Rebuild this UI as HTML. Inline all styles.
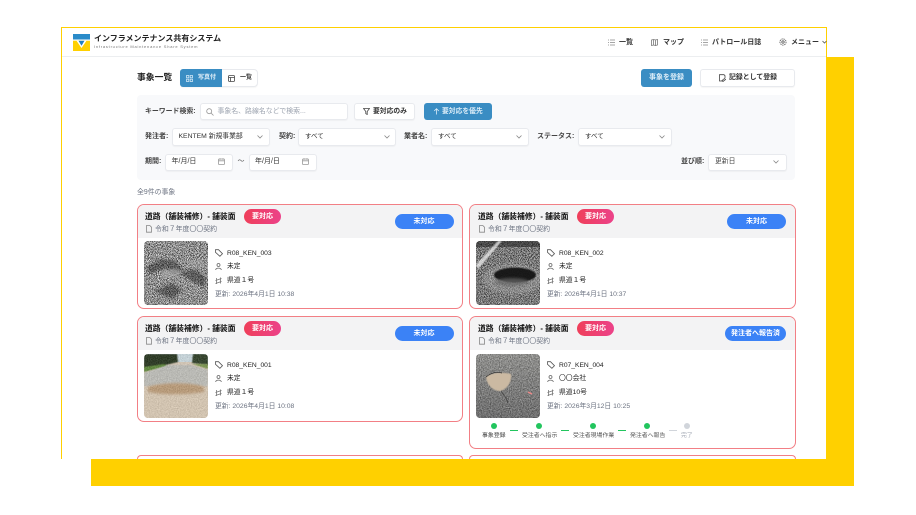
<!DOCTYPE html>
<html lang="ja"><head><meta charset="utf-8"><title>事象一覧</title>
<style>
*{box-sizing:border-box;margin:0;padding:0}
html,body{width:916px;height:515px;overflow:hidden;background:#fff}
body{position:relative;font-family:"Liberation Sans","Noto Sans CJK JP",sans-serif;color:#1f2937}
#w{position:absolute;left:0;top:0;width:916px;height:515px;filter:blur(.25px)}
.a{position:absolute}
.t{position:absolute;white-space:nowrap;line-height:12px;font-size:7px}
.b{font-weight:700}
.box{position:absolute;background:#fff;border:1px solid #e8eaee;border-radius:3px;box-shadow:0 1px 1px rgba(0,0,0,.04)}
.card{position:absolute;background:#fff;border:1.3px solid #f27f85;border-radius:7px;overflow:hidden}
.hd{position:absolute;left:0;right:0;top:0;background:#f3f3f4}
.pill{position:absolute;border-radius:8px;background:linear-gradient(90deg,#ef3f5a,#ec4289);color:#fff;font-weight:700;font-size:7px;line-height:15px;text-align:center}
.st{position:absolute;border-radius:8px;background:#3b82f6;color:#fff;font-weight:700;font-size:7px;line-height:15px;text-align:center}
svg{position:absolute;display:block}
.ic{fill:none;stroke:#6b7280;stroke-width:.8}
.dot{position:absolute;width:6px;height:6px;border-radius:50%;background:#22c55e}
.ln{position:absolute;height:1px;width:8px;background:#22c55e}
.ttl{font-size:7.800px;font-weight:700;color:#111}
.sub{font-size:6.900px;color:#6b7280}
.id{font-size:6.700px;color:#222}
.v{font-size:6.800px;color:#222}
.nv{font-size:7px;font-weight:700;color:#333}
.lb{font-size:7px;font-weight:700;color:#444}
</style></head><body><div id="w">
<div class="a" style="left:91px;top:57px;width:763px;height:429px;background:#ffd000"></div>
<div class="a" style="left:60.500px;top:26.500px;width:766.500px;height:432px;background:#fff;border:1.500px solid #ffd000;border-bottom:0"></div>
<div class="a" style="left:62px;top:56px;width:764px;height:1px;background:#eceef0"></div>

<!-- logo -->
<svg style="left:73px;top:34px" width="17" height="17" viewBox="0 0 17 17"><rect width="17" height="17" fill="#ffd000"/><rect width="17" height="6" fill="#2a8bc9"/><rect y="5.500" width="17" height="1.200" fill="#fff"/><path d="M3.500 6.700h10L8.500 14z" fill="#fff"/><path d="M5.500 6.700h6L8.500 11.800z" fill="#1f7fc0"/></svg>
<div class="t b" style="left:94px;top:33px;font-size:8px;color:#222">インフラメンテナンス共有システム</div>
<div class="t" style="left:94px;top:41px;font-size:4px;letter-spacing:.78px;color:#777">Infrastructure Maintenance Share System</div>

<!-- nav -->
<svg class="ic" style="left:608px;top:39px;stroke:#888" width="7" height="7"><path d="M0 1h1M2 1h5M0 3.500h1M2 3.500h5M0 6h1M2 6h5"/></svg>
<div class="t nv" style="left:619px;top:36.500px">一覧</div>
<svg class="ic" style="left:651px;top:39px;stroke:#777" width="7" height="7"><path d="M.5 1l2-.5 2 .5 2-.5v5.500l-2 .5-2-.5-2 .5zM2.500 .5v6M4.500 1v6"/></svg>
<div class="t nv" style="left:663px;top:36.500px">マップ</div>
<svg class="ic" style="left:701px;top:39px;stroke:#888" width="7" height="7"><path d="M0 1h1M2 1h5M0 3.500h1M2 3.500h5M0 6h1M2 6h5"/></svg>
<div class="t nv" style="left:712px;top:36.500px">パトロール日誌</div>
<svg class="ic" style="left:779px;top:38px;stroke:#555" width="8" height="8"><circle cx="4" cy="4" r="1.200"/><circle cx="4" cy="4" r="3.100" stroke-dasharray="1.400 .7"/></svg>
<div class="t nv" style="left:791px;top:36.500px">メニュー</div>
<svg class="ic" style="left:822px;top:40px;stroke:#555" width="5" height="4"><path d="M.5 1l2 2 2-2"/></svg>

<!-- title row -->
<div class="t b" style="left:137px;top:70.500px;font-size:8.800px;color:#222">事象一覧</div>
<div class="box" style="left:180px;top:69px;width:78px;height:18px;border-radius:4px"></div>
<div class="a" style="left:180px;top:69px;width:41.500px;height:18px;background:#3a8dc3;border-radius:3px 0 0 3px"></div>
<svg style="left:186px;top:74.500px;fill:none;stroke:#cfe6f5;stroke-width:.8" width="7" height="7"><rect x=".5" y=".5" width="2.300" height="2.300"/><rect x="4.200" y=".5" width="2.300" height="2.300"/><rect x=".5" y="4.200" width="2.300" height="2.300"/><rect x="4.200" y="4.200" width="2.300" height="2.300"/></svg>
<div class="t b" style="left:198px;top:72px;font-size:6px;color:#e6f2fa">写真付</div>
<svg class="ic" style="left:228px;top:74.500px;stroke:#444" width="7" height="7"><rect x=".5" y=".5" width="6" height="6" rx="1"/><path d="M.5 2.500h6M2.500 2.500v4"/></svg>
<div class="t b" style="left:240px;top:72px;font-size:6px;color:#333">一覧</div>

<div class="a" style="left:641px;top:69px;width:51px;height:18px;background:#3a8dc3;border-radius:3px"></div>
<div class="t b" style="left:641px;top:72px;width:51px;text-align:center;font-size:7px;color:#dcedf8">事象を登録</div>
<div class="box" style="left:700px;top:69px;width:95px;height:18px"></div>
<svg class="ic" style="left:718px;top:74px;stroke:#444" width="8" height="8"><path d="M5.500 7H1.500V.7h4.500l1 1V4M4 6.500l2.500-2 1 1-2.500 2z"/></svg>
<div class="t b" style="left:729px;top:72px;font-size:6.900px;color:#333">記録として登録</div>

<!-- filter panel -->
<div class="a" style="left:137px;top:95px;width:658px;height:85px;background:#f8f9fb;border-radius:4px"></div>
<div class="t lb" style="left:145px;top:106px;font-size:6.900px">キーワード検索:</div>
<div class="box" style="left:200px;top:103px;width:148px;height:17px"></div>
<svg class="ic" style="left:206px;top:107.500px;stroke:#999" width="8" height="8"><circle cx="3.200" cy="3.200" r="2.500"/><path d="M5.200 5.200l2.300 2.300"/></svg>
<div class="t" style="left:217.500px;top:106px;font-size:6.900px;color:#9ca3af">事象名、路線名などで検索...</div>
<div class="box" style="left:354px;top:103px;width:61px;height:17px"></div>
<svg class="ic" style="left:363px;top:108px;stroke:#444" width="7" height="7"><path d="M.5.500h6L4.200 3.500v3L2.800 5.700V3.500z"/></svg>
<div class="t b" style="left:373px;top:106px;font-size:6.800px;color:#333">要対応のみ</div>
<div class="a" style="left:423.500px;top:103px;width:68px;height:17px;background:#3a8dc3;border-radius:3px"></div>
<svg style="left:433px;top:108px;fill:none;stroke:#dcedf8;stroke-width:.8" width="7" height="7"><path d="M3.500 6.500V.8M1.200 3l2.300-2.300L5.800 3"/></svg>
<div class="t b" style="left:442px;top:106px;font-size:6.800px;color:#dcedf8">要対応を優先</div>

<div class="t lb" style="left:145px;top:131px">発注者:</div>
<div class="box" style="left:172px;top:128px;width:98px;height:17.500px"></div>
<div class="t" style="left:178.500px;top:131px;font-size:6.800px;color:#333">KENTEM 新規事業部</div>
<svg class="ic" style="left:257px;top:135px;stroke:#888" width="6" height="4"><path d="M.5.500l2.500 2.500 2.500-2.500"/></svg>
<div class="t lb" style="left:279px;top:131px">契約:</div>
<div class="box" style="left:298px;top:128px;width:98px;height:17.500px"></div>
<div class="t" style="left:305px;top:131px;font-size:6.500px;color:#333">すべて</div>
<svg class="ic" style="left:384px;top:135px;stroke:#888" width="6" height="4"><path d="M.5.500l2.500 2.500 2.500-2.500"/></svg>
<div class="t lb" style="left:404px;top:131px">業者名:</div>
<div class="box" style="left:431px;top:128px;width:98px;height:17.500px"></div>
<div class="t" style="left:438px;top:131px;font-size:6.500px;color:#333">すべて</div>
<svg class="ic" style="left:516px;top:135px;stroke:#888" width="6" height="4"><path d="M.5.500l2.500 2.500 2.500-2.500"/></svg>
<div class="t lb" style="left:537px;top:131px">ステータス:</div>
<div class="box" style="left:578px;top:128px;width:94px;height:17.500px"></div>
<div class="t" style="left:585px;top:131px;font-size:6.500px;color:#333">すべて</div>
<svg class="ic" style="left:659px;top:135px;stroke:#888" width="6" height="4"><path d="M.5.500l2.500 2.500 2.500-2.500"/></svg>

<div class="t lb" style="left:145px;top:156px">期間:</div>
<div class="box" style="left:165px;top:153.500px;width:68px;height:17.500px"></div>
<div class="t" style="left:171.500px;top:156px;font-size:7px;color:#333">年/月/日</div>
<svg class="ic" style="left:218px;top:158px;stroke:#999" width="7" height="7"><rect x=".5" y="1" width="6" height="5.500" rx=".7"/><path d="M.5 2.800h6M2 .2v1.500M5 .2v1.500"/></svg>
<div class="t" style="left:237.500px;top:156px;font-size:7px;color:#555">〜</div>
<div class="box" style="left:248.500px;top:153.500px;width:68.500px;height:17.500px"></div>
<div class="t" style="left:255px;top:156px;font-size:7px;color:#333">年/月/日</div>
<svg class="ic" style="left:302px;top:158px;stroke:#999" width="7" height="7"><rect x=".5" y="1" width="6" height="5.500" rx=".7"/><path d="M.5 2.800h6M2 .2v1.500M5 .2v1.500"/></svg>
<div class="t lb" style="left:681px;top:156px">並び順:</div>
<div class="box" style="left:708px;top:153.500px;width:79px;height:17.500px"></div>
<div class="t" style="left:715px;top:156px;font-size:6.800px;color:#444">更新日</div>
<svg class="ic" style="left:773px;top:160px;stroke:#888" width="6" height="4"><path d="M.5.500l2.500 2.500 2.500-2.500"/></svg>

<div class="t" style="left:137px;top:186.500px;font-size:6.900px;color:#6b7280">全9件の事象</div>

<!-- shared filters -->
<svg width="0" height="0" style="left:0;top:0"><defs>
<filter id="n2" x="0" y="0" width="100%" height="100%" color-interpolation-filters="sRGB"><feTurbulence type="fractalNoise" baseFrequency="1.100" numOctaves="2" seed="8"/><feColorMatrix type="saturate" values="0"/><feComponentTransfer><feFuncR type="linear" slope="3.400" intercept="-1.150"/><feFuncG type="linear" slope="3.400" intercept="-1.150"/><feFuncB type="linear" slope="3.400" intercept="-1.150"/><feFuncA type="linear" slope="0" intercept="1"/></feComponentTransfer></filter>
<filter id="n3" x="0" y="0" width="100%" height="100%" color-interpolation-filters="sRGB"><feTurbulence type="fractalNoise" baseFrequency=".9" numOctaves="2" seed="5"/><feColorMatrix type="saturate" values="0"/><feComponentTransfer><feFuncR type="linear" slope="2" intercept="-.55"/><feFuncG type="linear" slope="2" intercept="-.55"/><feFuncB type="linear" slope="2" intercept="-.55"/><feFuncA type="linear" slope="0" intercept="1"/></feComponentTransfer></filter>
<filter id="bl" x="-20%" y="-20%" width="140%" height="140%"><feGaussianBlur stdDeviation="1.200"/></filter>
<filter id="bs" x="-20%" y="-20%" width="140%" height="140%"><feGaussianBlur stdDeviation=".5"/></filter>
<clipPath id="cp"><rect width="64" height="64" rx="4"/></clipPath>
<linearGradient id="rd" x1="0" y1="0" x2="0" y2="1"><stop offset="0" stop-color="#a3a39f"/><stop offset=".35" stop-color="#8e8e8c"/><stop offset="1" stop-color="#6c6c6c"/></linearGradient>
</defs></svg>

<!-- card 1 -->
<div class="card" style="left:137px;top:204px;width:326px;height:105px"><div class="hd" style="height:33px"></div></div>
<div class="t ttl" style="left:145px;top:210.500px">道路（舗装補修）- 舗装面</div>
<div class="pill" style="left:244px;top:209px;width:37px">要対応</div>
<svg class="ic" style="left:146px;top:225px;stroke:#888" width="6" height="8"><path d="M.5.500h3.300L5.500 2.200v5H.5z"/></svg>
<div class="t sub" style="left:155px;top:223.500px">令和７年度〇〇契約</div>
<div class="st" style="left:394.500px;top:214px;width:59px">未対応</div>
<svg style="left:143.500px;top:241px" width="64" height="64"><g clip-path="url(#cp)"><rect width="64" height="64" filter="url(#n2)"/><rect width="64" height="64" fill="#999" opacity=".22"/><g filter="url(#bl)" fill="#111" opacity=".38"><path d="M2 26l16-8 14 2 8 10-10 2-8-5-16 6z"/><path d="M36 32l14-4 12 8-2 10-12-6zM10 50l18-8 10 8-10 8z"/></g><path d="M16 32l14-5 9 3-8 6-13 1z" fill="#aaa" opacity=".6" filter="url(#bl)"/><path d="M44 20l12-2 6 8-12 2z" fill="#aaa" opacity=".4" filter="url(#bl)"/></g></svg>
<svg class="ic" style="left:215px;top:249px;stroke:#555" width="8" height="8"><path d="M.5.700h3l4 4-2.600 2.600-4.400-4z"/></svg>
<div class="t id" style="left:227px;top:247.500px">R08_KEN_003</div>
<svg class="ic" style="left:215px;top:263px;stroke:#666" width="7" height="8"><circle cx="3.500" cy="2" r="1.500"/><path d="M.7 7c0-2.500 5.600-2.500 5.600 0"/></svg>
<div class="t v" style="left:227px;top:261px">未定</div>
<svg class="ic" style="left:215px;top:277px;stroke:#777" width="7" height="8"><path d="M.5 3.500l6-2M.5 6.500l6-2M1.500 1v6M5.500 .5v6"/></svg>
<div class="t v" style="left:227px;top:275px">県道１号</div>
<div class="t" style="left:215px;top:288.500px;font-size:6.800px;color:#6b7280">更新: 2026年4月1日 10:38</div>

<!-- card 2 -->
<div class="card" style="left:469px;top:204px;width:326.500px;height:105px"><div class="hd" style="height:33px"></div></div>
<div class="t ttl" style="left:478px;top:210.500px">道路（舗装補修）- 舗装面</div>
<div class="pill" style="left:577px;top:209px;width:37px">要対応</div>
<svg class="ic" style="left:479px;top:225px;stroke:#888" width="6" height="8"><path d="M.5.500h3.300L5.500 2.200v5H.5z"/></svg>
<div class="t sub" style="left:488px;top:223.500px">令和７年度〇〇契約</div>
<div class="st" style="left:727px;top:214px;width:59px">未対応</div>
<svg style="left:476px;top:241px" width="64" height="64"><g clip-path="url(#cp)"><rect width="64" height="64" filter="url(#n2)"/><rect width="64" height="64" fill="#555" opacity=".35"/><rect width="64" height="6" fill="#222" opacity=".55"/><path d="M0 24L22 0h4L2 28z" fill="#eee" opacity=".75" filter="url(#bs)"/><ellipse cx="37" cy="38" rx="30" ry="15" fill="#aaa" opacity=".4" filter="url(#bl)"/><ellipse cx="39" cy="34" rx="21" ry="7.500" fill="#0d0d0d" opacity=".9" filter="url(#bs)"/><ellipse cx="36" cy="41" rx="17" ry="4" fill="#666" opacity=".7" filter="url(#bl)"/></g></svg>
<svg class="ic" style="left:547px;top:249px;stroke:#555" width="8" height="8"><path d="M.5.700h3l4 4-2.600 2.600-4.400-4z"/></svg>
<div class="t id" style="left:559px;top:247.500px">R08_KEN_002</div>
<svg class="ic" style="left:547px;top:263px;stroke:#666" width="7" height="8"><circle cx="3.500" cy="2" r="1.500"/><path d="M.7 7c0-2.500 5.600-2.500 5.600 0"/></svg>
<div class="t v" style="left:559px;top:261px">未定</div>
<svg class="ic" style="left:547px;top:277px;stroke:#777" width="7" height="8"><path d="M.5 3.500l6-2M.5 6.500l6-2M1.500 1v6M5.500 .5v6"/></svg>
<div class="t v" style="left:559px;top:275px">県道１号</div>
<div class="t" style="left:547px;top:288.500px;font-size:6.800px;color:#6b7280">更新: 2026年4月1日 10:37</div>

<!-- card 3 -->
<div class="card" style="left:137px;top:316px;width:326px;height:106px"><div class="hd" style="height:33px"></div></div>
<div class="t ttl" style="left:145px;top:322.500px">道路（舗装補修）- 舗装面</div>
<div class="pill" style="left:244px;top:321px;width:37px">要対応</div>
<svg class="ic" style="left:146px;top:337px;stroke:#888" width="6" height="8"><path d="M.5.500h3.300L5.500 2.200v5H.5z"/></svg>
<div class="t sub" style="left:155px;top:335.500px">令和７年度〇〇契約</div>
<div class="st" style="left:394.500px;top:326px;width:59px">未対応</div>
<svg style="left:143.500px;top:353.500px" width="64" height="64"><g clip-path="url(#cp)"><rect width="64" height="64" fill="#e2d3c0"/><rect width="64" height="8" fill="#d5e4ea"/><path d="M0 0h33l1 8-16 4-18 2z" fill="#27351f" filter="url(#bs)"/><path d="M49 0h15v11l-16-2z" fill="#2f4028" filter="url(#bs)"/><path d="M0 13l20-3 4 2-24 6z" fill="#5f8c38" filter="url(#bs)"/><path d="M48 10l16 0v5z" fill="#7b9a4b" filter="url(#bs)"/><path d="M0 19L24 11h22l18 5v16H0z" fill="#c8c8c2" filter="url(#bs)"/><path d="M0 34l14-3h36l14 3v32H0z" fill="#e4d3bd" filter="url(#bs)"/><path d="M4 33c14-5 44-5 56 0v5c-20 3-40 3-56 0z" fill="#c4a27c" filter="url(#bl)"/><rect width="64" height="64" filter="url(#n3)" opacity=".16"/></g></svg>
<svg class="ic" style="left:215px;top:361px;stroke:#555" width="8" height="8"><path d="M.5.700h3l4 4-2.600 2.600-4.400-4z"/></svg>
<div class="t id" style="left:227px;top:359.500px">R08_KEN_001</div>
<svg class="ic" style="left:215px;top:375px;stroke:#666" width="7" height="8"><circle cx="3.500" cy="2" r="1.500"/><path d="M.7 7c0-2.500 5.600-2.500 5.600 0"/></svg>
<div class="t v" style="left:227px;top:373px">未定</div>
<svg class="ic" style="left:215px;top:389px;stroke:#777" width="7" height="8"><path d="M.5 3.500l6-2M.5 6.500l6-2M1.500 1v6M5.500 .5v6"/></svg>
<div class="t v" style="left:227px;top:387px">県道１号</div>
<div class="t" style="left:215px;top:400.500px;font-size:6.800px;color:#6b7280">更新: 2026年4月1日 10:08</div>

<!-- card 4 -->
<div class="card" style="left:469px;top:316px;width:326.500px;height:133px"><div class="hd" style="height:33px"></div></div>
<div class="t ttl" style="left:478px;top:322.500px">道路（舗装補修）- 舗装面</div>
<div class="pill" style="left:577px;top:321px;width:37px">要対応</div>
<svg class="ic" style="left:479px;top:337px;stroke:#888" width="6" height="8"><path d="M.5.500h3.300L5.500 2.200v5H.5z"/></svg>
<div class="t sub" style="left:488px;top:335.500px">令和７年度〇〇契約</div>
<div class="st" style="left:725px;top:326px;width:61px">発注者へ報告済</div>
<svg style="left:476px;top:353.500px" width="64" height="64"><g clip-path="url(#cp)"><rect width="64" height="64" fill="url(#rd)"/><rect width="64" height="64" filter="url(#n3)" opacity=".4"/><path d="M10 23c6-5 17-5 25-3 1 7-3 15-11 17-7 0-13-6-14-14z" fill="#cbb9a2" filter="url(#bs)"/><path d="M10 23c6-5 12-5 16-4" fill="none" stroke="#2a2a2a" stroke-width=".7"/><path d="M25 37l5 7 2 5" stroke="#333" stroke-width=".6" fill="none"/><path d="M52 38l4 2" stroke="#e88" stroke-width="1.500"/></g></svg>
<svg class="ic" style="left:547px;top:361px;stroke:#555" width="8" height="8"><path d="M.5.700h3l4 4-2.600 2.600-4.400-4z"/></svg>
<div class="t id" style="left:559px;top:359.500px">R07_KEN_004</div>
<svg class="ic" style="left:547px;top:375px;stroke:#666" width="7" height="8"><circle cx="3.500" cy="2" r="1.500"/><path d="M.7 7c0-2.500 5.600-2.500 5.600 0"/></svg>
<div class="t v" style="left:559px;top:373px">〇〇会社</div>
<svg class="ic" style="left:547px;top:389px;stroke:#777" width="7" height="8"><path d="M.5 3.500l6-2M.5 6.500l6-2M1.500 1v6M5.500 .5v6"/></svg>
<div class="t v" style="left:559px;top:387px">県道10号</div>
<div class="t" style="left:547px;top:400.500px;font-size:6.800px;color:#6b7280">更新: 2026年3月12日 10:25</div>

<div class="dot" style="left:491px;top:422.500px"></div>
<div class="dot" style="left:536px;top:422.500px"></div>
<div class="dot" style="left:590px;top:422.500px"></div>
<div class="dot" style="left:644px;top:422.500px"></div>
<div class="dot" style="left:684px;top:422.500px;background:#d1d5db"></div>
<div class="ln" style="left:510px;top:430px"></div>
<div class="ln" style="left:561px;top:430px"></div>
<div class="ln" style="left:618px;top:430px"></div>
<div class="ln" style="left:669px;top:430px;background:#d1d5db"></div>
<div class="t" style="left:482px;top:429.500px;font-size:5.900px;color:#444">事象登録</div>
<div class="t" style="left:522px;top:429.500px;font-size:5.900px;color:#555">受注者へ指示</div>
<div class="t" style="left:573px;top:429.500px;font-size:5.900px;color:#555">受注者現場作業</div>
<div class="t" style="left:630px;top:429.500px;font-size:5.900px;color:#555">発注者へ報告</div>
<div class="t" style="left:681px;top:429.500px;font-size:5.900px;color:#9ca3af">完了</div>

<!-- next row peeking -->
<div class="a" style="left:137px;top:455px;width:326px;height:3.500px;border:1.300px solid #f27f85;border-bottom:0;border-radius:5px 5px 0 0"></div>
<div class="a" style="left:469px;top:455px;width:326.500px;height:3.500px;border:1.300px solid #f27f85;border-bottom:0;border-radius:5px 5px 0 0"></div>
</div></body></html>
